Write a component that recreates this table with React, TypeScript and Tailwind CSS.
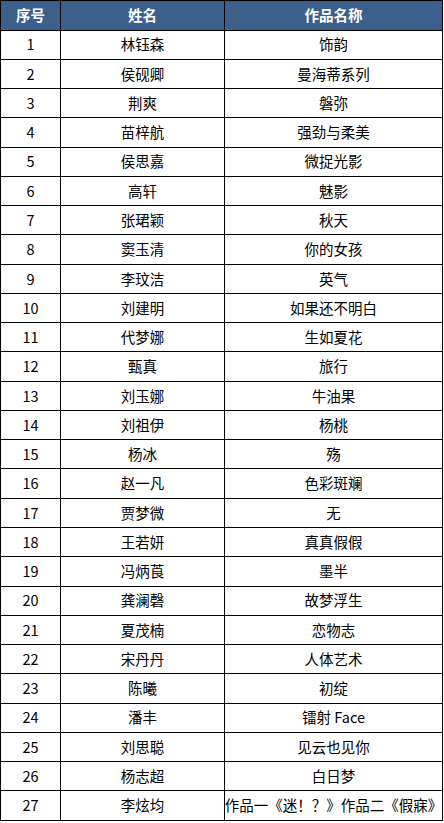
import React from "react";

const rows: [string, string, string][] = [
  ["1", "林钰森", "饰韵"],
  ["2", "侯砚卿", "曼海蒂系列"],
  ["3", "荆爽", "磐弥"],
  ["4", "苗梓航", "强劲与柔美"],
  ["5", "侯思嘉", "微捉光影"],
  ["6", "高轩", "魅影"],
  ["7", "张珺颖", "秋天"],
  ["8", "窦玉清", "你的女孩"],
  ["9", "李玟洁", "英气"],
  ["10", "刘建明", "如果还不明白"],
  ["11", "代梦娜", "生如夏花"],
  ["12", "甄真", "旅行"],
  ["13", "刘玉娜", "牛油果"],
  ["14", "刘祖伊", "杨桃"],
  ["15", "杨冰", "殇"],
  ["16", "赵一凡", "色彩斑斓"],
  ["17", "贾梦微", "无"],
  ["18", "王若妍", "真真假假"],
  ["19", "冯炳莨", "墨半"],
  ["20", "龚澜磬", "故梦浮生"],
  ["21", "夏茂楠", "恋物志"],
  ["22", "宋丹丹", "人体艺术"],
  ["23", "陈曦", "初绽"],
  ["24", "潘丰", "镭射 Face"],
  ["25", "刘思聪", "见云也见你"],
  ["26", "杨志超", "白日梦"],
  ["27", "李炫均", "作品一《迷！？》作品二《假寐》"],
];

export default function App() {
  return (
    <div
      className="w-[444px] h-[823px] bg-white"
      style={{ fontFamily: '"Noto Sans CJK SC", "Noto Sans", sans-serif' }}
    >
      <div className="w-[443px] border-l border-t border-black grid grid-cols-[60px_164px_218px] text-[14.5px] text-black">
        {["序号", "姓名", "作品名称"].map((h) => (
          <div
            key={h}
            className="h-[29.5px] bg-[#3c5f8c] text-white font-bold border-r border-b border-black flex items-center justify-center leading-none"
          >
            {h}
          </div>
        ))}
        {rows.map((r) =>
          r.map((c, i) => (
            <div
              key={r[0] + "-" + i}
              className="h-[29.28px] border-r border-b border-black flex items-center justify-center whitespace-nowrap overflow-hidden leading-none"
            >
              {c}
            </div>
          ))
        )}
      </div>
    </div>
  );
}
